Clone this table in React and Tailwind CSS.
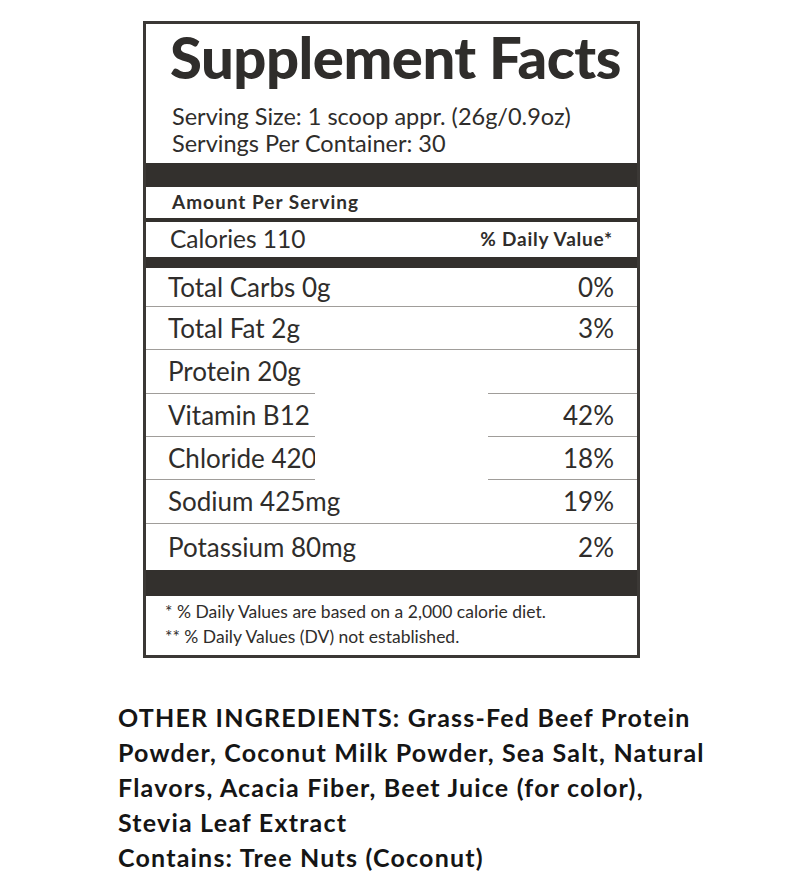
import React from 'react'

const rows = [
  { label: 'Total Carbs 0g', dv: '0%', h: 'h-[39px]' },
  { label: 'Total Fat 2g', dv: '3%', h: 'h-[43px]' },
  { label: 'Protein 20g', dv: '', h: 'h-[44px]' },
  { label: 'Vitamin B12 1mcg', dv: '42%', h: 'h-[43px]' },
  { label: 'Chloride 420mg', dv: '18%', h: 'h-[43px]' },
  { label: 'Sodium 425mg', dv: '19%', h: 'h-[44px]' },
  { label: 'Potassium 80mg', dv: '2%', h: 'h-[46px]', last: true }
]

function App() {
  return (
    <div className="min-h-screen bg-white font-['Lato',sans-serif] text-[#2f2d2b]">
      {/* Label */}
      <div className="relative ml-[143px] mt-[21px] w-[497px] border-[3px] border-[#3b3835]">
        <div className="pl-[24px] pr-[10px] pt-[3px] pb-[6px]">
          <h1 className="text-[58px] font-black leading-[60px] tracking-[-0.5px] whitespace-nowrap">Supplement Facts</h1>
          <p className="mt-[16px] text-[23.5px] leading-[27px] pl-[2px]">Serving Size: 1 scoop appr. (26g/0.9oz)</p>
          <p className="text-[23.5px] leading-[27px] pl-[2px]">Servings Per Container: 30</p>
        </div>
        <div className="h-[24px] bg-[#33302d]" />
        <div className="h-[31px] flex items-center pl-[26px] text-[19px] font-bold tracking-[1px]">Amount Per Serving</div>
        <div className="h-[4px] bg-[#33302d]" />
        <div className="h-[35px] flex items-center justify-between pl-[24px] pr-[24px]">
          <span className="text-[24.5px]">Calories 110</span>
          <span className="text-[19px] font-bold tracking-[0.8px]">% Daily Value*</span>
        </div>
        <div className="h-[11px] bg-[#33302d]" />
        {rows.map(r => (
          <div
            key={r.label}
            className={`${r.h} flex items-center justify-between pl-[22px] pr-[23px] text-[26px] ${r.last ? '' : 'border-b border-[#a09d9a]'}`}
          >
            <span>{r.label}</span>
            <span>{r.dv}</span>
          </div>
        ))}
        <div className="h-[26px] bg-[#33302d]" />
        <div className="pl-[19px] pt-[3px] pb-[6px] text-[17.5px] leading-[25px]">
          <p>* % Daily Values are based on a 2,000 calorie diet.</p>
          <p>** % Daily Values (DV) not established.</p>
        </div>
        {/* print glitch patch */}
        <div className="absolute left-[169px] top-[336px] w-[173px] h-[124px] bg-white" />
      </div>

      {/* Ingredients */}
      <div className="ml-[118px] mt-[42px] text-[25px] leading-[35px] font-bold tracking-[1.2px] text-[#151515] whitespace-nowrap">
        <p>OTHER INGREDIENTS: Grass-Fed Beef Protein</p>
        <p>Powder, Coconut Milk Powder, Sea Salt, Natural</p>
        <p>Flavors, Acacia Fiber, Beet Juice (for color),</p>
        <p>Stevia Leaf Extract</p>
        <p>Contains: Tree Nuts (Coconut)</p>
      </div>
    </div>
  )
}

export default App
